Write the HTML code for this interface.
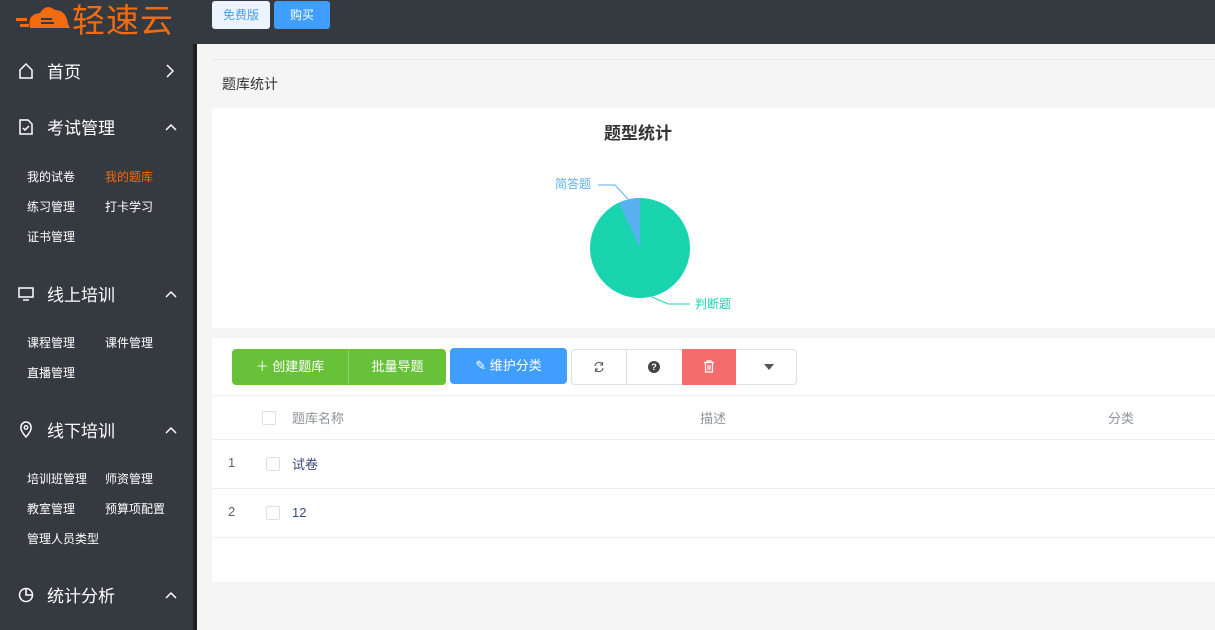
<!DOCTYPE html>
<html><head><meta charset="utf-8"><style>
*{margin:0;padding:0;box-sizing:border-box}
body{width:1215px;height:630px;overflow:hidden;background:#f5f5f5;font-family:"Liberation Sans","Noto Sans CJK SC",sans-serif;position:relative}
.top{position:absolute;left:0;top:0;width:1215px;height:44px;background:#343a40}
.side{position:absolute;left:0;top:44px;width:193px;height:586px;background:#343a40}
.sep{position:absolute;left:193px;top:44px;width:4px;height:586px;background:#1f2225}
.sec{position:absolute;left:18px;color:#fff;font-size:17px}
.sec .ic{position:absolute;left:0;top:0;width:16px}
.sec .t{position:absolute;left:29px;top:-4px;white-space:nowrap}
.sec .ar{position:absolute;left:146px;top:0}
.it{position:absolute;color:#fff;font-size:12px;white-space:nowrap}
.abs{position:absolute}
.btn{position:absolute;height:36px;color:#fff;font-size:13px;line-height:36px;text-align:center}
</style></head><body>
<div class="top"></div>
<div class="abs" style="left:14px;top:2px;width:58px;height:30px">
<svg width="58" height="30"><path d="M16 26 Q13 12 26 11 Q32 1 41 8 Q52 8 54 22 L56 26Z" fill="#f26b0f"/><rect x="2" y="16" width="11" height="3" fill="#f26b0f"/><rect x="6" y="22" width="9" height="3" fill="#f26b0f"/><rect x="27" y="16" width="11" height="2" fill="#343a40"/><rect x="27" y="20" width="13" height="2" fill="#343a40"/></svg></div>
<div class="abs" style="left:72px;top:-6px;color:#f26b0f;font-size:33px;font-weight:normal;letter-spacing:1px">轻速云</div>
<div class="abs" style="left:212px;top:1px;width:58px;height:28px;background:#ecf5ff;border-radius:3px;color:#409eff;font-size:12px;text-align:center;line-height:28px">免费版</div>
<div class="abs" style="left:274px;top:1px;width:56px;height:28px;background:#409eff;border-radius:3px;color:#fff;font-size:12px;text-align:center;line-height:28px">购买</div>
<div class="side"></div><div class="sep"></div>

<div class="sec" style="top:62px"><svg class="ic" width="16" height="18"><path d="M2 8 L8 2 L14 8 V16 H2Z" fill="none" stroke="#fff" stroke-width="1.5"/></svg><span class="t">首页</span><svg class="ar" width="12" height="18" style="left:146px"><path d="M3 3 L9 9 L3 15" fill="none" stroke="#fff" stroke-width="1.5"/></svg></div>
<div class="sec" style="top:118px"><svg class="ic" width="16" height="18"><path d="M2 2 H10 L14 6 V16 H2Z M5 10 L7 12 L11 8" fill="none" stroke="#fff" stroke-width="1.5"/></svg><span class="t">考试管理</span><svg class="ar" width="14" height="18"><path d="M2 12 L7 7 L12 12" fill="none" stroke="#fff" stroke-width="1.5"/></svg></div>
<div class="it" style="left:27px;top:168px">我的试卷</div><div class="it" style="left:105px;top:168px;color:#f26b0f">我的题库</div>
<div class="it" style="left:27px;top:198px">练习管理</div><div class="it" style="left:105px;top:198px">打卡学习</div>
<div class="it" style="left:27px;top:228px">证书管理</div>
<div class="sec" style="top:285px"><svg class="ic" width="16" height="18"><path d="M1 3 H15 V12 H1Z M5 15 H11" fill="none" stroke="#fff" stroke-width="1.5"/></svg><span class="t">线上培训</span><svg class="ar" width="14" height="18"><path d="M2 12 L7 7 L12 12" fill="none" stroke="#fff" stroke-width="1.5"/></svg></div>
<div class="it" style="left:27px;top:334px">课程管理</div><div class="it" style="left:105px;top:334px">课件管理</div>
<div class="it" style="left:27px;top:364px">直播管理</div>
<div class="sec" style="top:421px"><svg class="ic" width="16" height="18"><path d="M8 16 Q2 9 3 6 A5 5 0 0 1 13 6 Q14 9 8 16Z" fill="none" stroke="#fff" stroke-width="1.5"/><circle cx="8" cy="6.5" r="1.8" fill="none" stroke="#fff" stroke-width="1.3"/></svg><span class="t">线下培训</span><svg class="ar" width="14" height="18"><path d="M2 12 L7 7 L12 12" fill="none" stroke="#fff" stroke-width="1.5"/></svg></div>
<div class="it" style="left:27px;top:470px">培训班管理</div><div class="it" style="left:105px;top:470px">师资管理</div>
<div class="it" style="left:27px;top:500px">教室管理</div><div class="it" style="left:105px;top:500px">预算项配置</div>
<div class="it" style="left:27px;top:530px">管理人员类型</div>
<div class="sec" style="top:586px"><svg class="ic" width="16" height="18"><circle cx="8" cy="9" r="6.5" fill="none" stroke="#fff" stroke-width="1.5"/><path d="M8 2.5 V9 H14.5" fill="none" stroke="#fff" stroke-width="1.5"/></svg><span class="t">统计分析</span><svg class="ar" width="14" height="18"><path d="M2 12 L7 7 L12 12" fill="none" stroke="#fff" stroke-width="1.5"/></svg></div>

<div class="abs" style="left:212px;top:59px;width:1003px;height:1px;background:#e8e8e8"></div>
<div class="abs" style="left:222px;top:74px;font-size:14px;color:#333">题库统计</div>
<div class="abs" style="left:212px;top:108px;width:1003px;height:220px;background:#fff"></div>
<div class="abs" style="left:604px;top:119px;font-size:17px;font-weight:bold;color:#333">题型统计</div>
<svg class="abs" style="left:540px;top:170px" width="200" height="145">
<circle cx="100" cy="78" r="50" fill="#1ad4b0"/>
<path d="M100 78 L100 28 A50 50 0 0 0 79 32.6Z" fill="#5ab1ef"/>
<polyline points="88,29 75,15 58,15" fill="none" stroke="#5ab1ef"/>
<polyline points="112,127 128,134 150,134" fill="none" stroke="#1ad4b0"/>
<text x="15" y="18" font-size="12" fill="#5ab1ef" font-family="Liberation Sans,Noto Sans CJK SC,sans-serif">简答题</text>
<text x="155" y="138" font-size="12" fill="#1ad4b0" font-family="Liberation Sans,Noto Sans CJK SC,sans-serif">判断题</text>
</svg>
<div class="abs" style="left:212px;top:338px;width:1003px;height:244px;background:#fff"></div>
<div class="btn" style="left:232px;top:349px;width:214px;background:#67c23a;border-radius:4px"></div>
<div class="btn" style="left:232px;top:349px;width:116px">＋ 创建题库</div>
<div class="abs" style="left:348px;top:349px;width:1px;height:36px;background:#8fd16b"></div>
<div class="btn" style="left:349px;top:349px;width:97px">批量导题</div>
<div class="btn" style="left:450px;top:348px;width:117px;background:#409eff;border-radius:4px">✎ 维护分类</div>
<div class="abs" style="left:571px;top:349px;width:226px;height:36px;border:1px solid #dcdfe6;border-radius:4px"></div>
<div class="abs" style="left:626px;top:350px;width:1px;height:34px;background:#dcdfe6"></div>
<div class="abs" style="left:682px;top:349px;width:54px;height:36px;background:#f56c6c"></div>
<svg class="abs" style="left:593px;top:361px" width="12" height="12"><path d="M2 5 A4 4 0 0 1 9.5 3.5 M10 7 A4 4 0 0 1 2.5 8.5" fill="none" stroke="#555" stroke-width="1.1"/><path d="M9.5 1 V4 H7" fill="none" stroke="#555" stroke-width="1"/><path d="M2.5 11 V8 H5" fill="none" stroke="#555" stroke-width="1"/></svg>
<div class="abs" style="left:648px;top:361px;width:12px;height:12px;border-radius:50%;background:#444;color:#fff;font-size:9px;text-align:center;line-height:12px;font-weight:bold">?</div>
<svg class="abs" style="left:703px;top:360px" width="12" height="13"><path d="M1 2.5 H11 M4 2 V1 H8 V2 M2.5 3 V12 H9.5 V3 M5 5 V10 M7 5 V10" fill="none" stroke="#fff" stroke-width="1.2"/></svg>
<div class="abs" style="left:764px;top:364px;border-left:5px solid transparent;border-right:5px solid transparent;border-top:6px solid #555"></div>
<div class="abs" style="left:212px;top:395px;width:1003px;height:1px;background:#ebeef5"></div>
<div class="abs" style="left:262px;top:411px;width:14px;height:14px;border:1px solid #dcdfe6;border-radius:2px"></div>
<div class="abs" style="left:292px;top:408px;font-size:13px;color:#909399">题库名称</div>
<div class="abs" style="left:700px;top:408px;font-size:13px;color:#909399">描述</div>
<div class="abs" style="left:1108px;top:408px;font-size:13px;color:#909399">分类</div>
<div class="abs" style="left:212px;top:439px;width:1003px;height:1px;background:#ebeef5"></div>
<div class="abs" style="left:228px;top:455px;font-size:13px;color:#606266">1</div>
<div class="abs" style="left:266px;top:457px;width:14px;height:14px;border:1px solid #dcdfe6;border-radius:2px"></div>
<div class="abs" style="left:292px;top:454px;font-size:13px;color:#3c4a7a">试卷</div>
<div class="abs" style="left:212px;top:488px;width:1003px;height:1px;background:#ebeef5"></div>
<div class="abs" style="left:228px;top:504px;font-size:13px;color:#606266">2</div>
<div class="abs" style="left:266px;top:506px;width:14px;height:14px;border:1px solid #dcdfe6;border-radius:2px"></div>
<div class="abs" style="left:292px;top:505px;font-size:13px;color:#3c4a7a">12</div>
<div class="abs" style="left:212px;top:537px;width:1003px;height:1px;background:#ebeef5"></div>
</body></html>
